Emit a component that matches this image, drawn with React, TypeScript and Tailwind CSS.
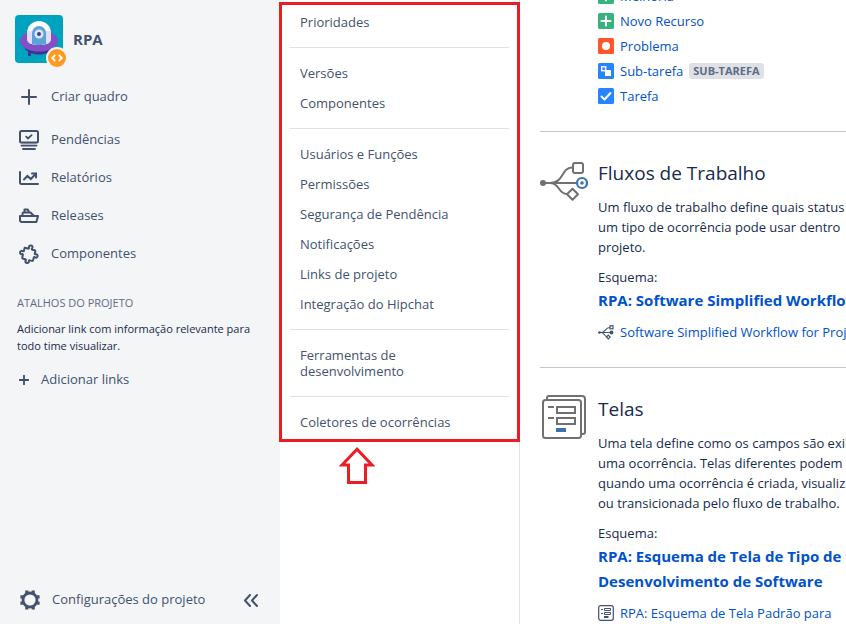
import type { ReactNode } from "react";

function PlusIcon({ size, weight }: { size: number; weight: number }) {
  return (
    <svg width={size} height={size} viewBox="0 0 16 16" fill="none" stroke="currentColor" strokeWidth={weight} strokeLinecap="round" aria-hidden="true">
      <path d="M8 1v14M1 8h14" />
    </svg>
  );
}

function BacklogIcon() {
  return (
    <svg width="20" height="20" viewBox="0 0 20 20" fill="none" stroke="currentColor" strokeWidth="2" strokeLinecap="round" aria-hidden="true">
      <rect x="1" y="1" width="18" height="11.5" rx="1.5" />
      <path d="M7.2 6.7 9 8.5l3.6-3.4" strokeWidth="1.8" />
      <path d="M2.5 15.6h15M4 19h12" strokeWidth="1.8" />
      <path d="M2 13.8h16" strokeWidth="1" opacity="0.35" />
    </svg>
  );
}

function ReportsIcon() {
  return (
    <svg width="20" height="20" viewBox="0 0 20 20" fill="none" stroke="currentColor" strokeWidth="2" strokeLinecap="round" strokeLinejoin="round" aria-hidden="true">
      <path d="M1 4v10.5A1.5 1.5 0 0 0 2.500 16H19" />
      <path d="m5 11.500 3.400-3.500 3.400 3 5-5.200" strokeLinejoin="miter" />
      <path d="M13 5.500h4v4" strokeLinejoin="miter" />
    </svg>
  );
}

function ShipIcon() {
  return (
    <svg width="20" height="20" viewBox="0 0 20 20" fill="none" stroke="currentColor" strokeWidth="2" strokeLinejoin="round" aria-hidden="true">
      <path d="M1 10h18l-1.600 6H3A2 2 0 0 1 1 14z" />
      <path d="M3.500 10V7.500A1 1 0 0 1 4.500 6.500H11.500L15 10" />
      <path d="M5.500 6V3.500h3.200L10 6" />
    </svg>
  );
}

function PuzzleIcon() {
  return (
    <svg width="20" height="20" viewBox="0 0 20 20" fill="none" stroke="currentColor" strokeWidth="2" strokeLinejoin="round" aria-hidden="true">
      <g transform="rotate(14 10 10)">
        <path d="M4.500 5h3.200c.8 0 1-.5.700-1.200C7.800 2.300 8.700 1.200 10 1.200s2.200 1.100 1.600 2.600c-.3.700-.1 1.200.700 1.200h2.200c.8 0 1 .4 1 1v2c0 .8.500 1 1.100.7 1.300-.5 2.300.3 2.300 1.500s-1 2-2.300 1.500c-.6-.3-1.100 0-1.100.8v2.300c0 .8-.4 1.200-1.200 1.200h-2c-.8 0-1 .4-.7 1.100.6 1.300-.4 2.100-1.600 2.100s-2.200-.8-1.600-2.100c.3-.7.1-1.100-.7-1.100H5.500c-.8 0-1.200-.4-1.200-1.200v-2.200c0-.8-.4-1.100-1.100-.8-1.300.6-2.200-.3-2.200-1.500S1.900 8.200 3.200 8.700c.7.300 1.100 0 1.100-.7V5z" />
      </g>
    </svg>
  );
}

function GearIcon() {
  return (
    <svg width="20" height="20" viewBox="-10 -10 20 20" fill="none" stroke="currentColor" aria-hidden="true">
      <circle r="7" strokeWidth="2.800" />
      <path
        d="M7 3.200h2.600M7-3.200h2.600M-7 3.200h-2.600M-7-3.200h-2.600M3.200 7v2.600M-3.200 7v2.600M3.200-7v-2.600M-3.200-7v-2.600"
        strokeWidth="3.200"
      />
    </svg>
  );
}

function ProjectAvatar() {
  return (
    <svg width="52" height="52" viewBox="0 0 52 52" aria-hidden="true">
      <rect width="48" height="48" rx="4" fill="#00a3bf" />
      <path d="M13 34h3v7h-3zM32 34h3v6h-3z" fill="#403294" />
      <path d="M9 32c4 10 26 10 30 0z" fill="#403294" />
      <ellipse cx="24" cy="26" rx="19" ry="10.500" fill="#8050c4" />
      <path d="M12 18a12 12 0 0 1 24 0v5c0 5-4 7-12 7s-12-2-12-7z" fill="#fff" />
      <path d="M12 16h24v7c0 5-4 7-12 7s-12-2-12-7z" fill="#e6dcf5" />
      <path d="M17 18a7 7 0 0 1 14 0v11.300c-4 1-10 1-14 0z" fill="#5ba3dd" />
      <circle cx="24" cy="19" r="4.500" fill="#e6e4fa" />
      <circle cx="24" cy="19" r="2" fill="#344583" />
      <circle cx="42" cy="43" r="11" fill="#f4f5f7" />
      <circle cx="42" cy="43" r="9" fill="#ff991f" />
      <path d="m40.200 40-3 3 3 3M43.800 40l3 3-3 3" fill="none" stroke="#fff" strokeWidth="1.800" />
    </svg>
  );
}

function WorkflowIcon() {
  return (
    <svg width="48" height="42" viewBox="0 0 48 42" fill="none" stroke="#707070" strokeWidth="2" aria-hidden="true">
      <circle cx="3" cy="22" r="3" fill="#707070" stroke="none" />
      <path d="M3 22h33" />
      <path d="M10 22c14 0 11-15 22-15.500M10 22c10 0 8 11 17 11" />
      <rect x="33" y="2" width="10" height="10" rx="2" fill="#fff" />
      <path d="m32.500 27.700 5.500 5.500-5.500 5.500-5.500-5.500z" fill="#fff" strokeLinejoin="round" />
      <circle cx="42" cy="22" r="5" fill="#fff" stroke="#3b73af" strokeWidth="2.200" />
      <circle cx="42" cy="22" r="1.800" fill="#3b73af" stroke="none" />
    </svg>
  );
}

function ScreensIcon() {
  return (
    <svg width="48" height="48" viewBox="0 0 48 48" fill="none" stroke="#707070" strokeWidth="2" aria-hidden="true">
      <path d="M7 5V4a2 2 0 0 1 2-2h33a3 3 0 0 1 3 3v33a2 2 0 0 1-2 2h-1" />
      <rect x="3" y="6" width="38" height="38" rx="2.500" />
      <path d="M8 13h6M8 24h6" />
      <path d="M17 13h18v6H17zM17 24h18v6H17z" />
      <path d="M16 36h10" stroke="#3b73af" strokeWidth="4" />
    </svg>
  );
}

function SmallWorkflowIcon() {
  return (
    <svg width="16" height="16" viewBox="0 0 16 16" fill="none" stroke="#42526e" strokeWidth="1.200" aria-hidden="true">
      <path d="M0 8.500h12M3 8.500c5 0 3.500-5 9-5M3 8.500c4 0 3 4 6 4" />
      <circle cx="1.500" cy="8.500" r="1.300" fill="#42526e" stroke="none" />
      <rect x="12" y="1.800" width="3" height="3" fill="#fff" />
      <circle cx="13.500" cy="8.500" r="1.900" fill="#42526e" stroke="none" />
      <path d="m10.300 11.200 1.800 1.800-1.800 1.800L8.500 13z" fill="#fff" />
    </svg>
  );
}

function SmallScreenIcon() {
  return (
    <svg width="16" height="16" viewBox="0 0 16 16" fill="none" stroke="#42526e" aria-hidden="true">
      <rect x="0.700" y="0.700" width="14.600" height="14.600" rx="2" strokeWidth="1.200" />
      <path d="M3 4.500h2M3 8.500h2" />
      <path d="M6.500 3.500h6v2h-6zM6.500 7.500h6v2h-6z" />
      <path d="M6 12h4.500" strokeWidth="2" />
    </svg>
  );
}

type IssueKind = "plus" | "dot" | "sub" | "check";

function IssueIcon({ kind }: { kind: IssueKind }) {
  const fill = kind === "plus" ? "#36b37e" : kind === "dot" ? "#ff5630" : "#2684ff";
  return (
    <svg width="16" height="16" viewBox="0 0 16 16" className="shrink-0" aria-hidden="true">
      <rect width="16" height="16" rx="1.500" fill={fill} />
      {kind === "plus" && <path d="M8 3.500v9M3.500 8h9" stroke="#fff" strokeWidth="2" strokeLinecap="round" />}
      {kind === "dot" && <circle cx="8" cy="8" r="4" fill="#fff" />}
      {kind === "sub" && (
        <>
          <rect x="3.700" y="3.700" width="4" height="4" fill="none" stroke="#fff" strokeWidth="1.400" />
          <rect x="7" y="7" width="6" height="6" rx="0.600" fill="#fff" />
        </>
      )}
      {kind === "check" && (
        <path d="m3.500 8.500 3 3 6-6.500" fill="none" stroke="#fff" strokeWidth="2" strokeLinecap="round" strokeLinejoin="round" />
      )}
    </svg>
  );
}

const projectLinks: { label: string; icon: ReactNode }[] = [
  { label: "Pendências", icon: <BacklogIcon /> },
  { label: "Relatórios", icon: <ReportsIcon /> },
  { label: "Releases", icon: <ShipIcon /> },
  { label: "Componentes", icon: <PuzzleIcon /> },
];

const settingsGroups = [
  ["Prioridades"],
  ["Versões", "Componentes"],
  ["Usuários e Funções", "Permissões", "Segurança de Pendência", "Notificações", "Links de projeto", "Integração do Hipchat"],
  ["Ferramentas de desenvolvimento"],
  ["Coletores de ocorrências"],
];

const issueTypes: { label: string; kind: IssueKind; tag?: string }[] = [
  { label: "Melhoria", kind: "plus" },
  { label: "Novo Recurso", kind: "plus" },
  { label: "Problema", kind: "dot" },
  { label: "Sub-tarefa", kind: "sub", tag: "Sub-tarefa" },
  { label: "Tarefa", kind: "check" },
];

function Sidebar() {
  return (
    <aside className="flex w-[280px] shrink-0 flex-col bg-[#f4f5f7] text-[#42526e]">
      <header className="flex h-[82px] gap-1.5 pl-[15px] pt-[15px]">
        <ProjectAvatar />
        <h1 className="text-[15px] font-bold leading-[48px]">RPA</h1>
      </header>
      <button type="button" className="flex h-[30px] items-center gap-3.5 pl-[21px] text-left">
        <PlusIcon size={16} weight={2} />
        Criar quadro
      </button>
      <nav className="mt-[9px]">
        {projectLinks.map(({ label, icon }) => (
          <a key={label} href="#" className="flex h-[38px] items-center gap-3 pl-[19px]">
            {icon}
            {label}
          </a>
        ))}
      </nav>
      <section className="mt-[22px] px-[17px]">
        <h2 className="text-[11px] font-medium uppercase leading-4 text-[#5e6c84]">Atalhos do projeto</h2>
        <p className="mt-[9px] whitespace-nowrap text-[11px] leading-[17px] text-[#172b4d]">
          Adicionar link com informação relevante para
          <br />
          todo time visualizar.
        </p>
        <button type="button" className="mt-[11px] flex h-[30px] items-center gap-3 pl-0.5">
          <PlusIcon size={10} weight={3} />
          Adicionar links
        </button>
      </section>
      <footer className="mb-2 mt-auto flex h-8 items-center justify-between pl-5 pr-5">
        <a href="#" className="flex items-center gap-3">
          <GearIcon />
          Configurações do projeto
        </a>
        <button type="button" aria-label="Recolher">
          <svg width="17" height="14" viewBox="0 0 17 14" fill="none" stroke="currentColor" strokeWidth="2" strokeLinecap="round" strokeLinejoin="round">
            <path d="M7 2 2 7.500 7 13M14 2 9 7.500l5 5.500" />
          </svg>
        </button>
      </footer>
    </aside>
  );
}

function SettingsMenu() {
  return (
    <div className="w-60 shrink-0 border-r border-[#dfe1e6] text-[#42526e]">
      <nav className="relative px-2.5 pb-[5px] pt-[7px]">
        {settingsGroups.map((group) => (
          <ul key={group[0]} className="mt-2.5 border-t border-[#dfe1e6] pt-2.5 first:mt-0 first:border-0 first:pt-0">
            {group.map((item) => (
              <li key={item}>
                <a href="#" className="block max-w-[180px] px-2.5 py-[7px] leading-4">
                  {item}
                </a>
              </li>
            ))}
          </ul>
        ))}
        <div className="pointer-events-none absolute -left-px -right-px bottom-0 top-0.5 border-3 border-[#ed1c24]" />
      </nav>
      <svg width="36" height="37" viewBox="0 0 36 37" fill="none" stroke="#ed1c24" strokeWidth="3" className="ml-[59px] mt-[5px]" aria-hidden="true">
        <path d="M18 2.200 3 18h6.500v17.500h17V18H33z" />
      </svg>
    </div>
  );
}

function SchemeSection({ icon, title, text, scheme, linkIcon, link }: {
  icon: ReactNode;
  title: string;
  text: string[];
  scheme: string[];
  linkIcon: ReactNode;
  link: string;
}) {
  return (
    <section className="flex gap-2.5 border-t border-[#c1c7d0] pb-[27px] pt-[29px]">
      <div className="-mt-[3px] flex size-12 shrink-0 items-center">{icon}</div>
      <div className="whitespace-nowrap">
        <h2 className="text-[19px] font-medium leading-6">{title}</h2>
        <p className="mt-3 leading-5">
          {text.map((line) => (
            <span key={line} className="block">{line}</span>
          ))}
        </p>
        <p className="mt-2.5 leading-5">Esquema:</p>
        <a href="#" className="mt-px block text-[15px] font-bold leading-[25px] text-[#0052cc]">
          {scheme.map((line) => (
            <span key={line} className="block">{line}</span>
          ))}
        </a>
        <a href="#" className="mt-[11px] flex items-center gap-1.5 leading-4 text-[#0052cc]">
          {linkIcon}
          {link}
        </a>
      </div>
    </section>
  );
}

export default function App() {
  return (
    <div className="flex h-screen overflow-hidden bg-white font-['Open_Sans','Noto_Sans',sans-serif] text-[13px] text-[#172b4d]">
      <Sidebar />
      <SettingsMenu />
      <main className="min-w-0 flex-1 overflow-hidden pl-5">
        <ul className="-mt-4 pb-[22px] pl-[58px]">
          {issueTypes.map(({ label, kind, tag }) => (
            <li key={label} className="flex gap-1.5 pb-[5px] pt-1 leading-4">
              <IssueIcon kind={kind} />
              <a href="#" className="text-[#0052cc]">{label}</a>
              {tag && (
                <span className="rounded-[3px] bg-[#dfe1e6] px-1 text-[11px] font-bold uppercase text-[#5e6c84]">{tag}</span>
              )}
            </li>
          ))}
        </ul>
        <SchemeSection
          icon={<WorkflowIcon />}
          title="Fluxos de Trabalho"
          text={["Um fluxo de trabalho define quais status", "um tipo de ocorrência pode usar dentro", "projeto."]}
          scheme={["RPA: Software Simplified Workflow"]}
          linkIcon={<SmallWorkflowIcon />}
          link="Software Simplified Workflow for Project"
        />
        <SchemeSection
          icon={<ScreensIcon />}
          title="Telas"
          text={[
            "Uma tela define como os campos são exibidos",
            "uma ocorrência. Telas diferentes podem",
            "quando uma ocorrência é criada, visualizada",
            "ou transicionada pelo fluxo de trabalho.",
          ]}
          scheme={["RPA: Esquema de Tela de Tipo de", "Desenvolvimento de Software"]}
          linkIcon={<SmallScreenIcon />}
          link="RPA: Esquema de Tela Padrão para"
        />
      </main>
    </div>
  );
}
